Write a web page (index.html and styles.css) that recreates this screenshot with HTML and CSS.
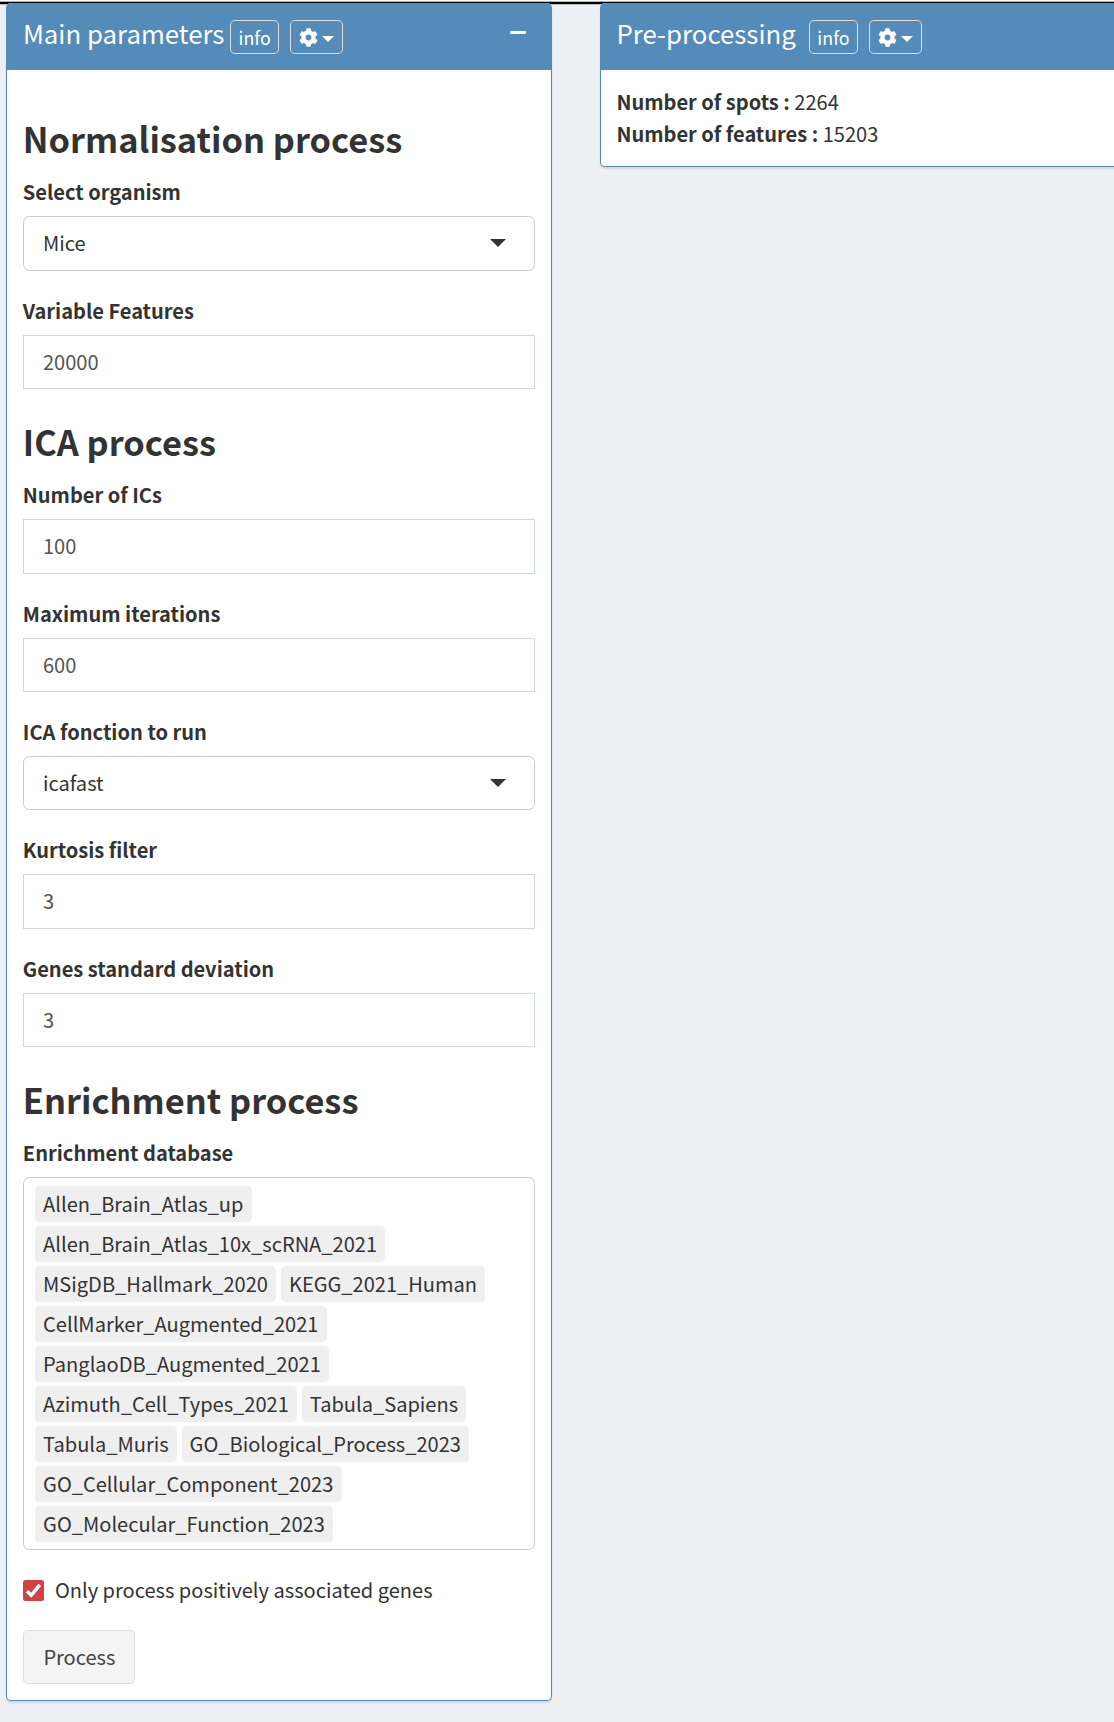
FILE: index.html
```html
<!DOCTYPE html>
<html lang="en">
<head>
<meta charset="utf-8">
<title>Main parameters</title>
<link rel="stylesheet" href="styles.css">
</head>
<body>
<svg class="defs" width="0" height="0" aria-hidden="true">
  <symbol id="gear" viewBox="0 0 512 512"><path fill="currentColor" d="M487.4 315.7l-42.6-24.6c4.3-23.200 4.300-47 0-70.200l42.600-24.600c4.900-2.800 7.100-8.600 5.500-14-11.100-35.600-30-67.800-54.700-94.600-3.800-4.100-10-5.100-14.800-2.300L380.800 110c-17.900-15.400-38.500-27.300-60.800-35.100V25.800c0-5.600-3.900-10.500-9.400-11.700-36.700-8.200-74.300-7.800-109.200 0-5.500 1.200-9.400 6.100-9.400 11.700V75c-22.200 7.900-42.800 19.800-60.800 35.100L88.700 85.500c-4.900-2.800-11-1.900-14.800 2.300-24.700 26.700-43.600 58.900-54.700 94.600-1.700 5.400.6 11.200 5.500 14L67.300 221c-4.300 23.200-4.300 47 0 70.200l-42.600 24.600c-4.900 2.800-7.100 8.600-5.500 14 11.100 35.600 30 67.800 54.700 94.600 3.800 4.100 10 5.100 14.800 2.300l42.600-24.600c17.900 15.400 38.500 27.300 60.800 35.100v49.200c0 5.600 3.900 10.500 9.400 11.700 36.700 8.200 74.300 7.800 109.200 0 5.500-1.200 9.400-6.100 9.400-11.700v-49.200c22.200-7.900 42.800-19.800 60.800-35.100l42.600 24.600c4.900 2.800 11 1.900 14.800-2.300 24.700-26.700 43.600-58.900 54.700-94.600 1.500-5.500-.7-11.300-5.600-14.100zM256 336c-44.100 0-80-35.900-80-80s35.900-80 80-80 80 35.900 80 80-35.900 80-80 80z"/></symbol>
</svg>
<div class="topbar"></div>
<main class="columns">
  <section class="box box-params">
    <header class="box-header">
      <h3 class="box-title">Main parameters</h3>
      <button class="tool info">info</button>
      <button class="tool menu"><svg class="gear"><use href="#gear"/></svg><span class="caret"></span></button>
      <span class="collapse"></span>
    </header>
    <div class="box-body">
      <h2>Normalisation process</h2>
      <div class="group"><label>Select organism</label><div class="control select"><span>Mice</span><i class="arrow"></i></div></div>
      <div class="group"><label>Variable Features</label><div class="control">20000</div></div>
      <h2>ICA process</h2>
      <div class="group"><label>Number of ICs</label><div class="control">100</div></div>
      <div class="group"><label>Maximum iterations</label><div class="control">600</div></div>
      <div class="group"><label>ICA fonction to run</label><div class="control select"><span>icafast</span><i class="arrow"></i></div></div>
      <div class="group"><label>Kurtosis filter</label><div class="control">3</div></div>
      <div class="group"><label>Genes standard deviation</label><div class="control">3</div></div>
      <h2>Enrichment process</h2>
      <div class="group"><label>Enrichment database</label>
        <div class="tags">
          <span class="tag">Allen_Brain_Atlas_up</span>
          <span class="tag">Allen_Brain_Atlas_10x_scRNA_2021</span>
          <span class="tag">MSigDB_Hallmark_2020</span>
          <span class="tag">KEGG_2021_Human</span>
          <span class="tag">CellMarker_Augmented_2021</span>
          <span class="tag">PanglaoDB_Augmented_2021</span>
          <span class="tag">Azimuth_Cell_Types_2021</span>
          <span class="tag">Tabula_Sapiens</span>
          <span class="tag">Tabula_Muris</span>
          <span class="tag">GO_Biological_Process_2023</span>
          <span class="tag">GO_Cellular_Component_2023</span>
          <span class="tag">GO_Molecular_Function_2023</span>
        </div>
      </div>
      <div class="check">
        <svg class="tick" viewBox="0 0 21 21"><rect width="21" height="21" rx="2.500" fill="#d04343"/><path d="M4 11.300 8.200 15.300 16.800 4.800" fill="none" stroke="#fff" stroke-width="3.500"/></svg>
        <span>Only process positively associated genes</span>
      </div>
      <button class="process">Process</button>
    </div>
  </section>
  <section class="box box-pre">
    <header class="box-header">
      <h3 class="box-title">Pre-processing</h3>
      <button class="tool info">info</button>
      <button class="tool menu"><svg class="gear"><use href="#gear"/></svg><span class="caret"></span></button>
    </header>
    <div class="box-body">
      <p><b>Number of spots :</b> 2264</p>
      <p><b>Number of features :</b> 15203</p>
    </div>
  </section>
</main>
</body>
</html>
```
FILE: styles.css
```css
* { box-sizing: border-box; }
body {
  margin: 0;
  height: 1722px;
  overflow: hidden;
  background: #ecf0f5;
  color: #333;
  font: 20.06px/32px "Noto Sans CJK SC", "Noto Sans", sans-serif;
}
.defs { display: block; }
.topbar {
  height: 5px;
  background: linear-gradient(#fff 1px, #b4b4b4 1px 2px, #000 2px 4px, #b8bbbf 4px);
}
.columns {
  display: grid;
  grid-template-columns: 545.3px 545.3px;
  column-gap: 48.300px;
  align-items: start;
  margin: -2px 0 0 6.400px;
  width: 1140px;
}
.box {
  background: #fff;
  border: 1px solid #548bb8;
  border-top: 0;
  border-radius: 4.800px;
  box-shadow: 0 1.600px 1.600px rgba(0, 0, 0, .1);
}
.box-header {
  display: flex;
  align-items: flex-start;
  height: 67px;
  padding: 17px 16px 0 15.500px;
  border-radius: 4px 4px 0 0;
  background: #548bb8;
  color: #fff;
}
.box-title {
  margin: -3px 0 0;
  width: 207.300px;
  font-size: 25.800px;
  font-weight: 400;
  line-height: 32px;
  white-space: nowrap;
}
.box-pre .box-title { width: 192.500px; }
.tool {
  display: flex;
  align-items: center;
  justify-content: center;
  height: 34px;
  margin: 0 11px 0 0;
  padding: 0;
  border: 1px solid #ddd;
  border-radius: 4.800px;
  background: transparent;
  color: #fff;
  font: inherit;
  font-size: 17.900px;
  line-height: 30px;
}
.info { width: 49px; }
.menu { width: 53px; gap: 4px; }
.gear { width: 19px; height: 19px; }
.caret {
  margin-top: 3px;
  border: 6px solid transparent;
  border-top-color: #fff;
  border-bottom: 0;
}
.collapse {
  width: 16px;
  height: 3px;
  margin: 11px 9px 0 auto;
  border-radius: 1px;
  background: #fff;
}
.box-body { padding: 16px; }
h2 {
  margin: 31px 0 17px -0.600px;
  font-size: 34.400px;
  line-height: 42.240px;
  font-weight: 700;
}
.group { margin-bottom: 24px; }
.group + h2 { margin-top: 31px; }
label { display: block; margin: 0 0 8px -0.600px; font-weight: 700; }
.control {
  height: 54.400px;
  padding: 0 18.600px;
  border: 1px solid #d2d6de;
  line-height: 52.400px;
  color: #555;
}
.select {
  display: flex;
  align-items: center;
  justify-content: space-between;
  padding-right: 28px;
  border-color: #ccc;
  border-radius: 6.400px;
  color: #333;
}
.arrow {
  border: 8px solid transparent;
  border-top-color: #333;
  border-bottom: 0;
  margin-top: -1px;
}
.tags {
  display: flex;
  flex-wrap: wrap;
  align-content: flex-start;
  gap: 4px 5px;
  height: 373px;
  padding: 8px 11px;
  border: 1px solid #ccc;
  border-radius: 6.400px;
}
.tag {
  height: 36px;
  padding: 0 8.300px 0 7.700px;
  border-radius: 4.800px;
  background: #efefef;
  line-height: 36px;
}
.check { display: flex; align-items: center; gap: 10.500px; height: 32px; }
.tick { width: 21px; height: 21px; }
.process {
  display: block;
  width: 112px;
  height: 54px;
  margin-top: 24px;
  padding: 0;
  border: 1px solid #ddd;
  border-radius: 4.800px;
  background: #f4f4f4;
  color: #444;
  font: inherit;
}
p { margin: 0 0 0 -0.600px; }
```
